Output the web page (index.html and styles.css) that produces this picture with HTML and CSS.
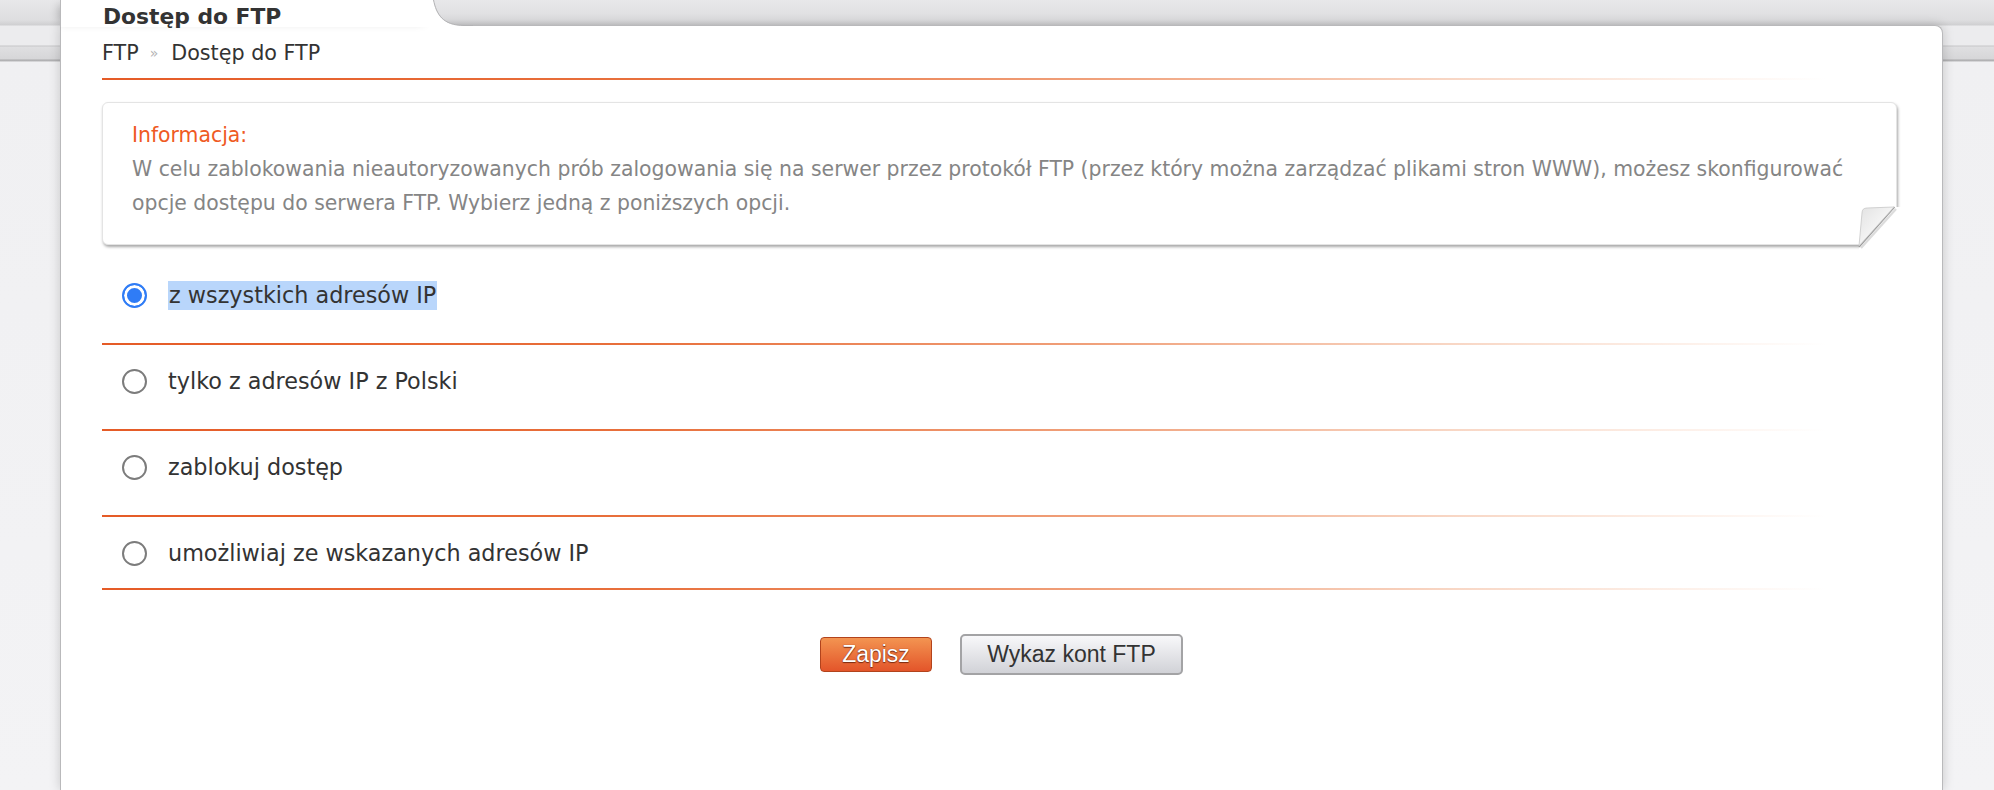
FILE: index.html
```html
<!DOCTYPE html>
<html lang="pl">
<head>
<meta charset="utf-8">
<title>Dostęp do FTP</title>
<link rel="stylesheet" href="styles.css">
</head>
<body>
<div class="card">
  <div class="tab"></div>
  <svg class="tab-curve" width="40" height="27" viewBox="0 0 40 27">
    <path d="M0 0 C3 14 9 25.5 31 25.5 L40 25.5 L40 27 L0 27 Z" fill="#fff"/>
    <path d="M0.5 0 C3.5 14 9.5 25.5 31 25.5 L40 25.5" fill="none" stroke="#b3b3b5" stroke-width="1"/>
  </svg>
  <h1 class="title">Dostęp do FTP</h1>
  <div class="crumbs"><span>FTP</span><span class="sep">»</span><span>Dostęp do FTP</span></div>

  <div class="info">
    <div class="info-head">Informacja:</div>
    <p class="info-text">W celu zablokowania nieautoryzowanych prób zalogowania się na serwer przez protokół FTP (przez który można zarządzać plikami stron WWW), możesz skonfigurować opcje dostępu do serwera FTP. Wybierz jedną z poniższych opcji.</p>
    <svg class="curl" width="50" height="52" viewBox="0 0 50 52">
      <defs>
        <linearGradient id="fold" x1="0" y1="0" x2="1" y2="1">
          <stop offset="0" stop-color="#e2e2e2"/>
          <stop offset="0.6" stop-color="#f7f7f7"/>
          <stop offset="1" stop-color="#ffffff"/>
        </linearGradient>
      </defs>
      <polygon points="39,6 50,6 50,52 4,52 4,45" fill="#fff"/>
      <line x1="41" y1="8" x2="6" y2="47" stroke="#dcdcdc" stroke-width="2.2"/>
      <line x1="39.5" y1="6" x2="4" y2="46" stroke="#9a9a9a" stroke-width="1.5"/>
      <path d="M39 6 L12 7 Q7 7 7 12 L4 45 Z" fill="url(#fold)" stroke="#c8c8c8" stroke-width="0.8"/>
    </svg>
  </div>

  <form class="options">
    <label class="opt"><input type="radio" name="ftp" checked><span class="opt-text"><span class="sel">z wszystkich adresów IP</span></span></label>
    <label class="opt"><input type="radio" name="ftp"><span class="opt-text">tylko z adresów IP z Polski</span></label>
    <label class="opt"><input type="radio" name="ftp"><span class="opt-text">zablokuj dostęp</span></label>
    <label class="opt"><input type="radio" name="ftp"><span class="opt-text">umożliwiaj ze wskazanych adresów IP</span></label>
  </form>

  <div class="actions">
    <button type="button" class="btn btn-primary">Zapisz</button>
    <button type="button" class="btn btn-secondary">Wykaz kont FTP</button>
  </div>
</div>
</body>
</html>
```

FILE: styles.css
```css
* { box-sizing: border-box; }

html, body {
  margin: 0;
  height: 100%;
  overflow: hidden;
}

body {
  font-family: "DejaVu Sans", Verdana, sans-serif;
  color: #333;
  background: linear-gradient(to bottom,
    #e8e8ea 0px, #dedee0 20px, #cfcfd1 25px, #ececee 26px,
    #ececee 45px, #c6c6c8 46px, #dfdfe1 47px, #d6d6d8 59px,
    #aaaaac 60px, #b9b9bb 61px, #f0f0f2 62px, #f3f3f5 790px);
}

.card {
  position: relative;
  margin: 25px 0 0 60px;
  width: 1883px;
  min-height: calc(100% - 25px);
  background: #fff;
  border: 1px solid #b9b9bb;
  border-bottom: none;
  border-top-right-radius: 8px;
  padding: 0 45px 0 41px;
  box-shadow: 0 0 12px rgba(0, 0, 0, 0.18);
}

.tab {
  position: absolute;
  left: -1px;
  top: -26px;
  width: 374px;
  height: 27px;
  background: #fff;
  border-left: 1px solid #b9b9bb;
  box-shadow: -6px 0 10px -5px rgba(0, 0, 0, 0.25);
}

.tab-curve {
  position: absolute;
  left: 372px;
  top: -26px;
  display: block;
}

.title {
  position: relative;
  z-index: 1;
  margin: -21px 0 0 0;
  padding-left: 1px;
  font-size: 21.8px;
  line-height: 24px;
  font-weight: bold;
  color: #333;
}

.crumbs {
  margin-top: 12px;
  font-size: 20.7px;
  line-height: 24px;
  color: #333;
  padding-bottom: 13px;
  border-bottom: 2px solid transparent;
  border-image: linear-gradient(to right, #e55b27 0%, #e8703c 30%, #f0a07a 55%, #f8d6c4 75%, #fdf0e9 88%, rgba(255, 255, 255, 0) 96%) 1;
}

.crumbs .sep {
  display: inline-block;
  margin: 0 13px 0 11px;
  font-size: 14px;
  color: #b4b4b4;
  vertical-align: 2px;
}

.info {
  position: relative;
  margin-top: 22px;
  background: #fff;
  border: 1px solid #e4e4e4;
  border-radius: 6px;
  box-shadow: 1px 2px 3px rgba(0, 0, 0, 0.35);
  padding: 15px 30px 24px 29px;
  font-size: 20.4px;
  line-height: 34px;
}

.info-head {
  color: #ef5a23;
}

.info-text {
  margin: 0;
  color: #858585;
}

.curl {
  position: absolute;
  right: -9px;
  bottom: -9px;
  display: block;
}

.options {
  margin: 14px 0 0 0;
}

.opt {
  display: flex;
  align-items: center;
  gap: 21px;
  padding: 21px 0 33px 20px;
  border-bottom: 2px solid transparent;
  border-image: linear-gradient(to right, #e55b27 0%, #e8703c 30%, #f0a07a 55%, #f8d6c4 75%, #fdf0e9 88%, rgba(255, 255, 255, 0) 96%) 1;
}

.opt:last-child {
  padding-bottom: 20px;
}

.opt input {
  appearance: none;
  -webkit-appearance: none;
  flex: none;
  margin: 0;
  width: 25px;
  height: 25px;
  border-radius: 50%;
  border: 2px solid #7c7c7c;
  background: #fff;
}

.opt input:checked {
  border-color: #2f7cf6;
  background: #2f7cf6;
  box-shadow: inset 0 0 0 3px #fff;
}

.opt-text {
  font-size: 22.3px;
  line-height: 30px;
  color: #333;
}

.sel {
  display: inline-block;
  line-height: 29px;
  background: #b9d6fb;
  padding: 0 1px;
}

.actions {
  display: flex;
  justify-content: center;
  align-items: center;
  gap: 28px;
  margin-top: 44px;
  padding-left: 4px;
}

.btn {
  font-family: "Liberation Sans", Arial, sans-serif;
  font-size: 23px;
  padding: 0;
  cursor: pointer;
}

.btn-primary {
  width: 112px;
  height: 35px;
  color: #fff;
  background: linear-gradient(to bottom, #f39451, #e3552a);
  border: 1px solid #b2431c;
  border-radius: 4px;
  text-shadow: 0 1px 1px #7a2a10, 0 0 1px #7a2a10;
}

.btn-secondary {
  width: 223px;
  height: 41px;
  color: #333;
  background: linear-gradient(to bottom, #f8f8fa, #d1d2d7);
  border: 2px solid #a3a3a5;
  border-radius: 5px;
}
```
